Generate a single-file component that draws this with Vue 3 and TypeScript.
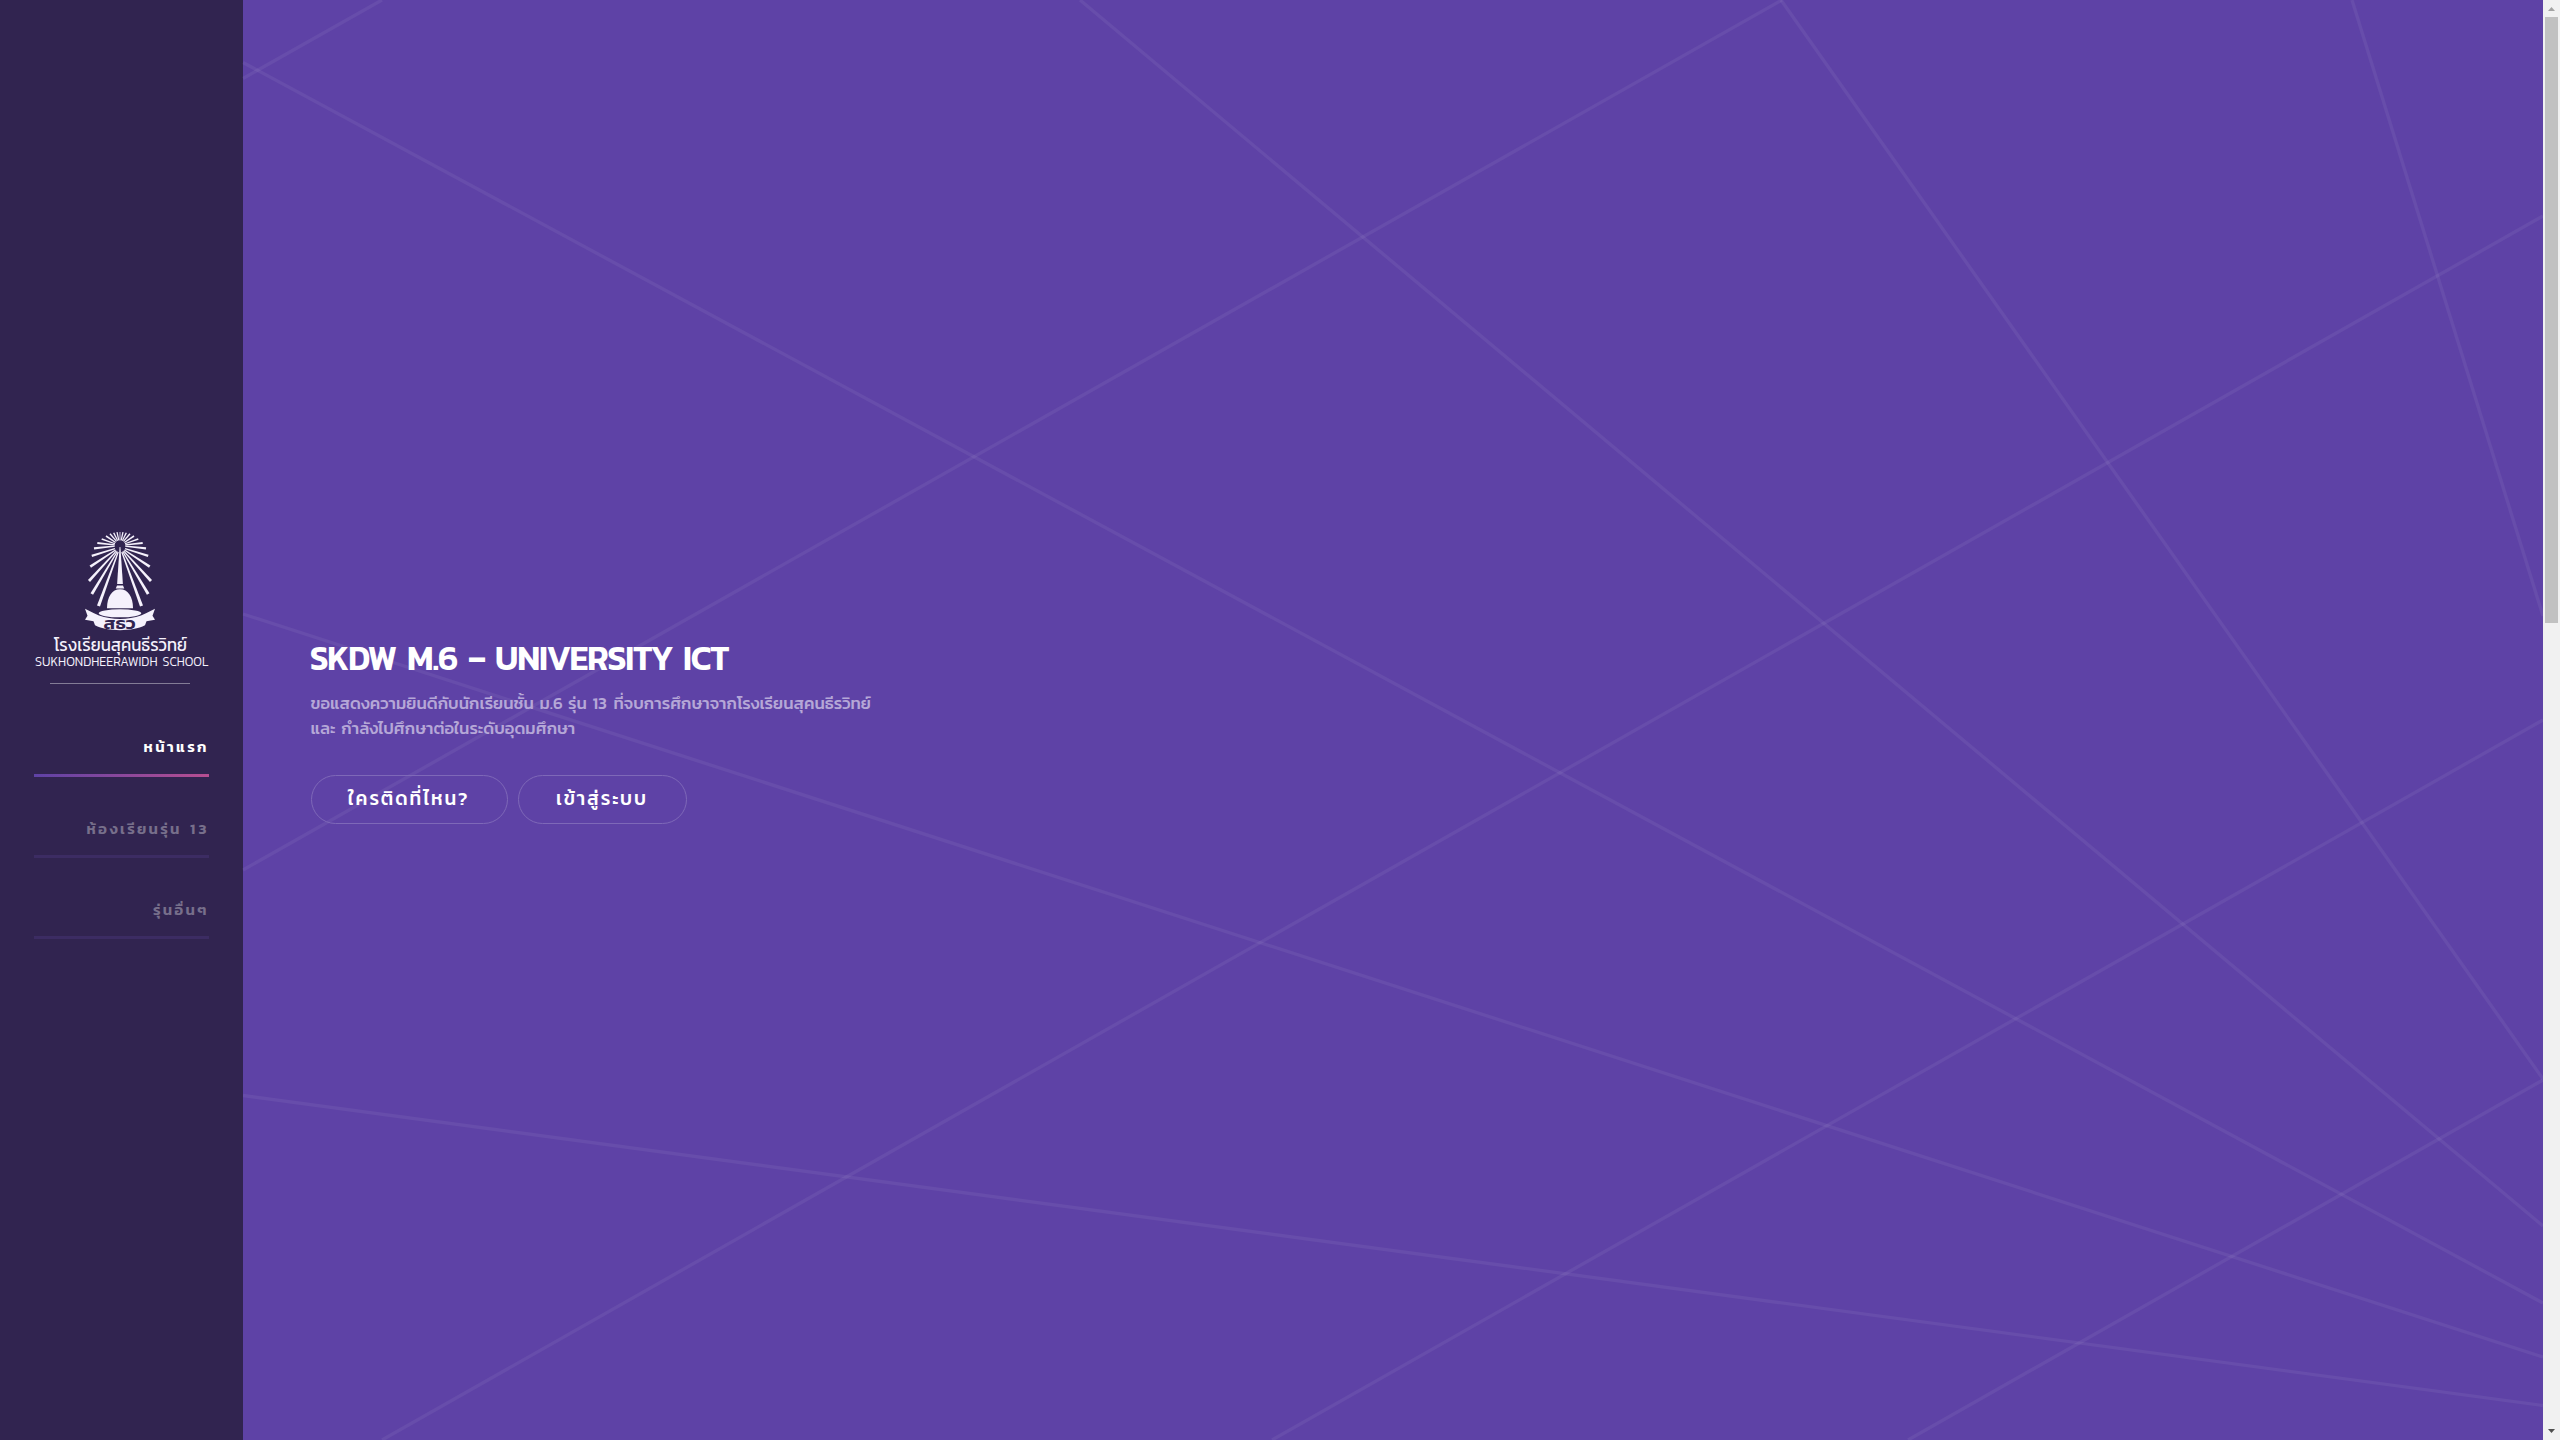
<script setup lang="ts">
interface Word { text: string; x: number; w: number }
interface NavItem { words: Word[]; active: boolean }

const title: Word[] = [
  { text: 'SKDW', x: -1, w: 86 },
  { text: 'M.6', x: 96, w: 50 },
  { text: '–', x: 157, w: 17 },
  { text: 'UNIVERSITY', x: 184, w: 177 },
  { text: 'ICT', x: 372, w: 45.5 },
]

const nav: NavItem[] = [
  { words: [{ text: 'หน้าแรก', x: 109.5, w: 63 }], active: true },
  { words: [{ text: 'ห้องเรียนรุ่น', x: 52.5, w: 93 }, { text: '13', x: 156, w: 16.5 }], active: false },
  { words: [{ text: 'รุ่นอื่นๆ', x: 119, w: 53.5 }], active: false },
]

const lines: number[][] = [
  [243, 78.5, 382, 0],
  [243, 62.5, 2543, 1303],
  [243, 870, 1782, 0],
  [1080, 0, 2543, 1226],
  [1781, 0, 2543, 1079],
  [2352, 0, 2543, 616],
  [243, 614, 2543, 1357],
  [243, 1095.5, 2543, 1405.5],
  [382, 1440, 2543, 216],
  [1272, 1440, 2543, 720],
  [1908, 1440, 2543, 1080],
]

// Emblem rays: outer tip x/y and half width at the tip
const rays: number[][] = [
  [98.5, 606, 1.6], [91.8, 594, 1.5], [89, 581, 1.4], [90.3, 566.7, 1.3],
  [91.8, 555.8, 1.2], [94, 548.3, 1.1], [97.3, 543, 1], [101.7, 539, 0.9],
  [106, 536, 0.8], [110, 533.7, 0.75], [113.7, 532.7, 0.7], [117, 532.2, 0.65],
]

function ray([x, y, w]: number[], flip: boolean): string {
  const cx = 120
  const cy = y > 550 ? 547 : 545.5
  const len = Math.hypot(x - cx, y - cy)
  const dx = (x - cx) / len
  const dy = (y - cy) / len
  const at = (d: number, s: number) => {
    const px = cx + dx * d - dy * s
    return `${flip ? 240 - px : px},${cy + dy * d + dx * s}`
  }
  return [at(5.3, 0.6), at(len, w), at(len, -w), at(5.3, -0.6)].join(' ')
}
</script>

<template>
  <div class="page">
    <aside class="sidebar">
      <svg class="logo" width="180" height="140" viewBox="30 528 180 140">
        <g fill="#f5f1fc">
          <template v-for="(r, i) in rays" :key="i">
            <polygon :points="ray(r, false)" />
            <polygon :points="ray(r, true)" />
          </template>
          <path d="M119.600 532h.8v8.500h-.8z" />
          <path d="M119.600 547h.8l2.500 37h-5.800z" />
          <path d="M117 585.500h6l1.300 3h-8.600z" />
          <path d="M107 608.300c0-11.500 5-19 13-19s13 7.500 13 19z" />
          <ellipse cx="120" cy="613.300" rx="21.300" ry="4" />
          <path d="M85 608.800l9 4.500 5 2.200c13 4.500 29 4.500 42 0l5-2.200 9-4.500-2.500 7 2.500 4-8.500 1.500-1.500 4c-13 6.500-37 6.500-50 0l-1.500-4-8.500-1.500 2.500-4z" />
        </g>
        <text class="mono" x="103.500" y="629" textLength="32" lengthAdjust="spacingAndGlyphs">สธว</text>
        <text class="school-th" x="54" y="650.700" textLength="133" lengthAdjust="spacingAndGlyphs">โรงเรียนสุคนธีรวิทย์</text>
        <text class="school-en" x="35" y="666" textLength="122.500" lengthAdjust="spacingAndGlyphs">SUKHONDHEERAWIDH</text>
        <text class="school-en" x="162.500" y="666" textLength="46" lengthAdjust="spacingAndGlyphs">SCHOOL</text>
      </svg>
      <div class="divider"></div>
      <nav>
        <a v-for="(n, i) in nav" :key="i" :class="{ active: n.active }">
          <svg width="175" height="40">
            <text v-for="w in n.words" :key="w.text" :x="w.x" :y="n.active ? 24 : 24.7" :textLength="w.w">{{ w.text }}</text>
          </svg>
        </a>
      </nav>
    </aside>
    <main class="intro">
      <svg class="backdrop" width="2300" height="1440" viewBox="243 0 2300 1440">
        <line v-for="(l, i) in lines" :key="i" :x1="l[0]" :y1="l[1]" :x2="l[2]" :y2="l[3]" />
      </svg>
      <section>
        <h1>
          <svg width="430" height="60">
            <text v-for="w in title" :key="w.text" :x="w.x" y="37" :textLength="w.w" lengthAdjust="spacingAndGlyphs">{{ w.text }}</text>
          </svg>
        </h1>
        <p>
          <svg width="570" height="50">
            <text y="16"><tspan x="-0.500">ขอแสดงความยินดีกับนักเรียนชั้น</tspan> <tspan x="228.500">ม.6</tspan> <tspan x="257">รุ่น</tspan> <tspan x="281.500">13</tspan> <tspan x="302.500">ที่จบการศึกษาจากโรงเรียนสุคนธีรวิทย์</tspan></text>
            <text y="41"><tspan x="-0.500">และ</tspan> <tspan x="30.300">กำลังไปศึกษาต่อในระดับอุดมศึกษา</tspan></text>
          </svg>
        </p>
        <div class="actions">
          <a class="button"><svg width="123" height="46"><text x="0" y="29" textLength="119.500">ใครติดที่ไหน?</text></svg></a>
          <a class="button"><svg width="95" height="46"><text x="1" y="29" textLength="90">เข้าสู่ระบบ</text></svg></a>
        </div>
      </section>
    </main>
    <div class="scrollbar">
      <svg width="17" height="17"><path d="M5 11h7L8.500 7z" fill="#a3a3a3" /></svg>
      <div class="thumb"></div>
      <svg class="down" width="17" height="17"><path d="M5 6h7L8.500 10z" fill="#505050" /></svg>
    </div>
  </div>
</template>

<style scoped>
.page { display: flex; width: 2560px; height: 1440px; overflow: hidden; font-family: Kanit, Prompt, "Noto Sans Thai", "Noto Sans", sans-serif; }
svg { display: block; overflow: visible; }
.sidebar { width: 243px; background: #312450; display: flex; flex-direction: column; align-items: center; }
.logo { margin: 528px 3px 0 0; }
.mono { font-size: 17px; font-weight: 600; fill: #312450; }
.school-th { font-size: 18px; fill: #f5f1fc; }
.school-en { font-size: 14.4px; font-weight: 300; fill: #f5f1fc; }
.divider { width: 140px; height: 1px; margin: 15px 3px 0 0; background: #837c96; }
nav { width: 175px; margin-top: 44px; }
nav a { display: block; height: 46px; margin-bottom: 32px; border-bottom: 3px solid #3c2c63; }
nav text { font-size: 15px; font-weight: 600; fill: #776f8b; }
nav .active { border-image: linear-gradient(to right, #5e42a6, #b74e91) 1; }
nav .active text { fill: #fff; }
.intro { width: 2300px; background: #5e42a6; display: grid; }
.intro > * { grid-area: 1 / 1; }
.backdrop line { stroke: #fff; stroke-opacity: 0.06; stroke-width: 3.4; }
section { margin: 633px 0 0 68px; }
h1 { margin: 0; font-size: 34.6px; font-weight: 600; }
h1 text { fill: #fff; letter-spacing: -1.1px; }
p { margin: 0; font-size: 16.75px; font-weight: 500; }
p text { fill: #b5a7d7; }
.actions { display: flex; gap: 10px; margin-top: 32px; }
.button { box-sizing: border-box; height: 49px; padding: 0 36px; border: 1px solid #7e68b8; border-radius: 25px; }
.button text { font-size: 19px; font-weight: 500; fill: #fff; }
.scrollbar { width: 17px; background: #f1f1f1; display: flex; flex-direction: column; align-items: center; }
.thumb { width: 13px; height: 606px; background: #c1c1c1; }
.down { margin-top: auto; }
</style>
